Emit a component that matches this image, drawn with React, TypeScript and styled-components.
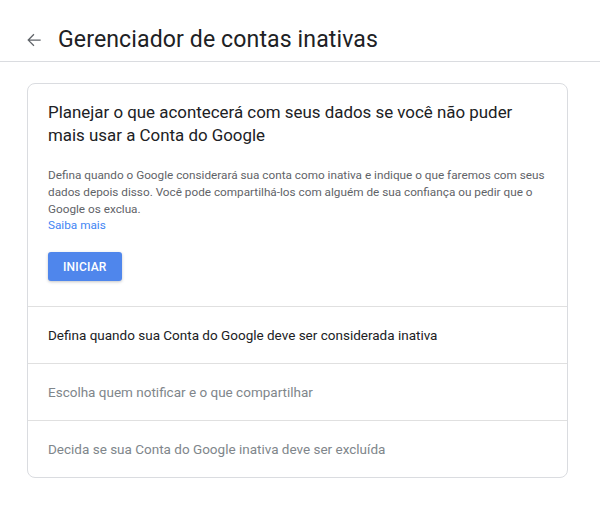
import React from "react";
import styled, { createGlobalStyle } from "styled-components";

const GlobalStyle = createGlobalStyle`
  html, body {
    margin: 0;
    padding: 0;
    background: #fff;
    font-family: Roboto, "Liberation Sans", Arial, sans-serif;
    -webkit-font-smoothing: antialiased;
  }
`;

const Page = styled.div`
  width: 600px;
  min-height: 507px;
  background: #fff;
`;

const Header = styled.header`
  display: flex;
  align-items: flex-end;
  height: 62px;
  padding: 0 0 7px 24px;
  border-bottom: 1px solid #dadce0;
  box-sizing: border-box;
`;

const BackButton = styled.button`
  display: grid;
  place-items: center;
  width: 20px;
  height: 20px;
  padding: 0;
  margin: 0 14px 4px 0;
  border: 0;
  background: none;
  cursor: pointer;
`;

const Title = styled.h1`
  margin: 0;
  font-size: 23.1px;
  line-height: 28px;
  font-weight: 400;
  color: #202124;
  letter-spacing: 0.1px;
`;

const Main = styled.main`
  padding: 21px 32px 28px 27px;
`;

const Card = styled.section`
  border: 1px solid #dadce0;
  border-radius: 8px;
  overflow: hidden;
`;

const Intro = styled.div`
  padding: 17px 20px 25px 20px;
  border-bottom: 1px solid #e0e0e0;
`;

const Heading = styled.h2`
  margin: 0 0 20px;
  font-size: 16.9px;
  font-weight: 400;
  line-height: 23px;
  color: #202124;
`;

const Description = styled.p`
  margin: 0;
  font-size: 11.75px;
  line-height: 17px;
  color: #5f6368;
`;

const LearnMore = styled.a`
  display: block;
  font-size: 11.75px;
  line-height: 15px;
  color: #4285f4;
  text-decoration: none;
`;

const StartButton = styled.button`
  margin-top: 19px;
  height: 29px;
  padding: 0 15px;
  border: 0;
  border-radius: 3px;
  background: #4f86ec;
  color: #fff;
  font-family: inherit;
  font-size: 12px;
  font-weight: 500;
  letter-spacing: 0.2px;
  box-shadow: 0 1px 3px rgba(60, 64, 67, 0.3);
  cursor: pointer;
`;

const Step = styled.div<{ $active?: boolean }>`
  display: flex;
  align-items: center;
  height: 56px;
  padding: 0 20px;
  font-size: 13.5px;
  color: ${p => (p.$active ? "#202124" : "#80868b")};

  & + & {
    border-top: 1px solid #e0e0e0;
  }
`;

const ArrowIcon = () => (
  <svg width="20" height="20" viewBox="0 0 24 24" fill="#5f6368">
    <path d="M20 11.25H6.87l5.6-5.6L11.4 4.6 4 12l7.4 7.4 1.07-1.05-5.6-5.6H20z" />
  </svg>
);

const steps = [
  { text: "Defina quando sua Conta do Google deve ser considerada inativa", active: true },
  { text: "Escolha quem notificar e o que compartilhar", active: false },
  { text: "Decida se sua Conta do Google inativa deve ser excluída", active: false },
];

export default function App() {
  return (
    <Page>
      <GlobalStyle />
      <Header>
        <BackButton aria-label="Voltar">
          <ArrowIcon />
        </BackButton>
        <Title>Gerenciador de contas inativas</Title>
      </Header>
      <Main>
        <Card>
          <Intro>
            <Heading>
              Planejar o que acontecerá com seus dados se você não puder mais usar a Conta do Google
            </Heading>
            <Description>
              Defina quando o Google considerará sua conta como inativa e indique o que faremos com
              seus dados depois disso. Você pode compartilhá-los com alguém de sua confiança ou pedir
              que o Google os exclua.
            </Description>
            <LearnMore href="#">Saiba mais</LearnMore>
            <StartButton>INICIAR</StartButton>
          </Intro>
          {steps.map(s => (
            <Step key={s.text} $active={s.active}>
              {s.text}
            </Step>
          ))}
        </Card>
      </Main>
    </Page>
  );
}
